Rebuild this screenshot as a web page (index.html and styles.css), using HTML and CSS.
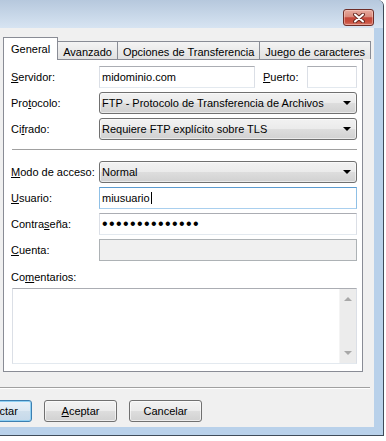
FILE: index.html
```html
<!DOCTYPE html>
<html lang="es">
<head>
    <meta charset="UTF-8">
    <meta name="viewport" content="width=device-width, initial-scale=1.0">
    <title>Gestor de sitios</title>
    <link rel="stylesheet" href="styles.css">
</head>
<body>
    <!-- ventana del diálogo -->
    <div class="window">
        <div class="titlebar">
            <div class="close-btn">
                <svg width="12" height="10" viewBox="0 0 12 10">
                    <path d="M2 1.5 L10 8.5 M10 1.5 L2 8.5" stroke="#6a2a22" stroke-width="4" stroke-linecap="round"/>
                    <path d="M2 1.5 L10 8.5 M10 1.5 L2 8.5" stroke="#ffffff" stroke-width="2" stroke-linecap="round"/>
                </svg>
            </div>
        </div>

        <div class="client">
            <!-- pestañas -->
            <div class="tabs">
                <div class="tab active">General</div>
                <div class="tab">Avanzado</div>
                <div class="tab">Opciones de Transferencia</div>
                <div class="tab">Juego de caracteres</div>
            </div>

            <div class="panel">
                <div class="group">
                    <div class="row">
                        <label class="label"><u>S</u>ervidor:</label>
                        <div class="field host">midominio.com</div>
                        <label class="label port-label"><u>P</u>uerto:</label>
                        <div class="field"></div>
                    </div>
                    <div class="row">
                        <label class="label">Pro<u>t</u>ocolo:</label>
                        <div class="combo">
                            <span class="combo-text">FTP - Protocolo de Transferencia de Archivos</span>
                            <span class="combo-arrow"></span>
                        </div>
                    </div>
                    <div class="row">
                        <label class="label">Ci<u>f</u>rado:</label>
                        <div class="combo">
                            <span class="combo-text">Requiere FTP explícito sobre TLS</span>
                            <span class="combo-arrow"></span>
                        </div>
                    </div>
                </div>

                <div class="sep"></div>

                <div class="group">
                    <div class="row">
                        <label class="label"><u>M</u>odo de acceso:</label>
                        <div class="combo">
                            <span class="combo-text">Normal</span>
                            <span class="combo-arrow"></span>
                        </div>
                    </div>
                    <div class="row">
                        <label class="label"><u>U</u>suario:</label>
                        <div class="field focus">miusuario<span class="caret"></span></div>
                    </div>
                    <div class="row">
                        <label class="label">Contra<u>s</u>eña:</label>
                        <div class="field"><span class="dots">••••••••••••••</span></div>
                    </div>
                    <div class="row">
                        <label class="label"><u>C</u>uenta:</label>
                        <div class="field disabled"></div>
                    </div>
                </div>

                <div class="comments-label">Co<u>m</u>entarios:</div>
                <div class="memo">
                    <div class="memo-scroll">
                        <span class="arrow-up"></span>
                        <span class="arrow-down"></span>
                    </div>
                </div>
            </div>

            <div class="hline"></div>

            <!-- botones -->
            <div class="buttons">
                <button class="btn default">Conectar</button>
                <button class="btn"><u>A</u>ceptar</button>
                <button class="btn">Cancelar</button>
            </div>
        </div>
    </div>
</body>
</html>
```

FILE: styles.css
```css
/* página */
* {
    box-sizing: border-box;
}

body {
    margin: 0;
    width: 386px;
    height: 441px;
    overflow: hidden;
    background: #ffffff;
    font-family: "Liberation Sans", Arial, sans-serif;
    font-size: 11px;
    color: #000;
}

/* marco de la ventana */
.window {
    width: 384px;
    background: #b9d1ea;
    border-right: 1px solid #3f4b59;
    border-bottom: 1px solid #3f4b59;
    border-top-right-radius: 6px;
    padding-bottom: 8px;
}

.titlebar {
    height: 28px;
    display: flex;
    justify-content: flex-end;
    align-items: flex-start;
    padding: 9px 9px 0 0;
    background: linear-gradient(#b6c8dd, #d7e4f2);
    border-top-right-radius: 6px;
}

.close-btn {
    width: 31px;
    height: 17px;
    display: flex;
    align-items: center;
    justify-content: center;
    border: 1px solid #6e2e28;
    border-radius: 3px;
    background: linear-gradient(#e7aa9e 0%, #d98a7c 45%, #c4473a 52%, #c9503f 80%, #d67a6c 100%);
    box-shadow: inset 0 0 0 1px rgba(255, 220, 210, 0.45);
}

.client {
    width: 374px;
    background: #f0f0f0;
    padding: 9px 0 5px 0;
}

/* pestañas */
.tabs {
    display: flex;
    align-items: flex-end;
    height: 22px;
    padding-left: 3px;
}

.tab {
    height: 18px;
    margin-left: -1px;
    padding: 3px 5px 0;
    border: 1px solid #898c95;
    border-bottom: none;
    background: linear-gradient(#f4f4f4, #e1e1e1);
    line-height: 14px;
    white-space: nowrap;
}

.tab.active {
    height: 23px;
    margin-left: 0;
    margin-bottom: -1px;
    padding: 4px 7px 0;
    background: #ffffff;
    position: relative;
    z-index: 1;
}

.panel {
    margin-left: 3px;
    width: 360px;
    border: 1px solid #898c95;
    background: #ffffff;
    padding: 6px 5px 7px 7px;
}

/* filas del formulario */
.row {
    display: flex;
    align-items: center;
    height: 22px;
}

.row + .row {
    margin-top: 4px;
}

.label {
    display: block;
    width: 88px;
    flex-shrink: 0;
}

.port-label {
    width: 44px;
    margin-left: 8px;
}

.field {
    flex: 1;
    height: 22px;
    border: 1px solid;
    border-color: #abadb3 #dbdfe6 #e3e9ef #dbdfe6;
    background: #ffffff;
    padding: 0 2px;
    line-height: 20px;
    white-space: nowrap;
    overflow: hidden;
}

.field.host {
    flex: none;
    width: 156px;
}

.field.focus {
    border-color: #5b9bd0 #8fc0e6 #a9cfee #8fc0e6;
}

.field.disabled {
    background: #f0f0f0;
    border-color: #adb2b5;
}

.caret {
    display: inline-block;
    width: 1px;
    height: 12px;
    margin-left: 1px;
    background: #000;
    vertical-align: -2px;
}

.dots {
    font-size: 16px;
    letter-spacing: 1.4px;
}

.combo {
    flex: 1;
    height: 22px;
    display: flex;
    align-items: center;
    padding: 0 5px 0 2px;
    border: 1px solid #707070;
    border-radius: 3px;
    background: linear-gradient(#f2f2f2, #ebebeb 48%, #dddddd 52%, #d1d1d1);
    box-shadow: inset 0 0 0 1px rgba(255, 255, 255, 0.55);
    white-space: nowrap;
}

.combo-text {
    flex: 1;
}

.combo-arrow {
    border-top: 4px solid #000;
    border-left: 4px solid transparent;
    border-right: 4px solid transparent;
}

.sep {
    height: 1px;
    margin: 9px 0 11px 1px;
    background: #a0a0a0;
}

/* comentarios */
.comments-label {
    margin-top: 9px;
    margin-bottom: 4px;
    line-height: 14px;
}

.memo {
    height: 76px;
    margin-left: 1px;
    display: flex;
    justify-content: flex-end;
    border: 1px solid;
    border-color: #abadb3 #dbdfe6 #e3e9ef #dbdfe6;
    background: #ffffff;
}

.memo-scroll {
    width: 17px;
    display: flex;
    flex-direction: column;
    justify-content: space-between;
    align-items: center;
    padding: 8px 0;
    background: #ececec;
    border-left: 1px solid #f4f4f4;
}

.arrow-up {
    border-bottom: 4px solid #a8a8a8;
    border-left: 4px solid transparent;
    border-right: 4px solid transparent;
}

.arrow-down {
    border-top: 4px solid #a8a8a8;
    border-left: 4px solid transparent;
    border-right: 4px solid transparent;
}

/* línea y botones inferiores */
.hline {
    width: 370px;
    height: 2px;
    margin-top: 15px;
    border-top: 1px solid #a0a0a0;
    border-bottom: 1px solid #ffffff;
}

.buttons {
    display: flex;
    gap: 12px;
    margin: 11px 0 0 -41px;
}

.btn {
    width: 73px;
    height: 22px;
    flex-shrink: 0;
    padding: 0;
    font: inherit;
    color: #000;
    border: 1px solid #707070;
    border-radius: 3px;
    background: linear-gradient(#f2f2f2, #ebebeb 48%, #dddddd 52%, #d1d1d1);
    box-shadow: inset 0 0 0 1px rgba(255, 255, 255, 0.6);
}

.btn.default {
    border-color: #3c7fb1;
    background: linear-gradient(#e9f1f8, #dde9f3 48%, #cfdfec 52%, #c5d9ea);
    box-shadow: inset 0 0 0 1px #8fd0f3;
}
```
